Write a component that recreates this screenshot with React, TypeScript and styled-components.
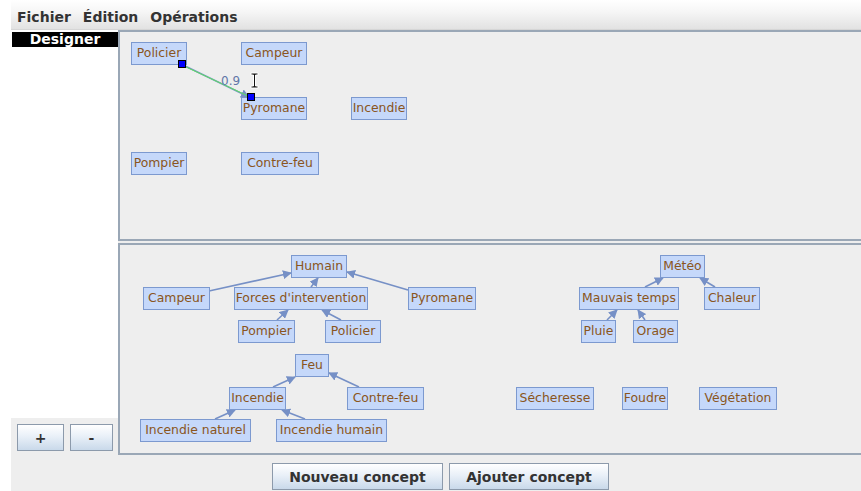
import styled, { createGlobalStyle } from 'styled-components';

const GlobalStyle = createGlobalStyle`
  html, body {
    margin: 0;
    padding: 0;
    background: #ffffff;
    overflow: hidden;
  }
  body {
    font-family: 'DejaVu Sans', 'Liberation Sans', sans-serif;
  }
`;

const Frame = styled.div`
  margin-left: 11px;
  width: 850px;
  height: 491px;
  display: flex;
  flex-direction: column;
  background: #eeeeee;
`;

const MenuBar = styled.div`
  height: 30px;
  display: flex;
  align-items: center;
  gap: 12px;
  padding: 5px 0 0 6px;
  box-sizing: border-box;
  background: linear-gradient(#ffffff 0%, #f6f6f6 40%, #e2e2e2 100%);
  border-bottom: 1px solid #d6d6d6;
`;

const MenuItem = styled.span`
  font-size: 14px;
  font-weight: bold;
  color: #333333;
`;

const Body = styled.div`
  height: 425px;
  display: flex;
`;

const SideColumn = styled.div`
  width: 107px;
  display: flex;
  flex-direction: column;
`;

const List = styled.div`
  flex: 1;
  background: #ffffff;
  padding: 2px 0 0 1px;
`;

const ListRow = styled.div<{ $selected?: boolean }>`
  height: 15px;
  line-height: 15px;
  text-align: center;
  font-size: 14px;
  font-weight: bold;
  color: ${(p) => (p.$selected ? '#ffffff' : '#333333')};
  background: ${(p) => (p.$selected ? '#000000' : 'transparent')};
`;

const SideButtons = styled.div`
  height: 37px;
  display: flex;
  gap: 6px;
  padding: 6px 0 0 6px;
  box-sizing: border-box;
`;

const Button = styled.button<{ $w: number }>`
  width: ${(p) => p.$w}px;
  height: 27px;
  padding: 0;
  border: 1px solid #8c9aab;
  background: linear-gradient(#ffffff 0%, #e9f0f8 45%, #c9d9ea 100%);
  font-family: 'DejaVu Sans', 'Liberation Sans', sans-serif;
  font-size: 14px;
  font-weight: bold;
  color: #333333;
`;

const SplitPane = styled.div`
  flex: 1;
  display: flex;
  flex-direction: column;
  gap: 2px;
`;

const Panel = styled.div<{ $h: number }>`
  position: relative;
  height: ${(p) => p.$h}px;
  box-sizing: border-box;
  background: #eeeeee;
  border: 2px solid #9aa7b6;
  border-right: none;
  overflow: hidden;
`;

const Canvas = styled.svg`
  position: absolute;
  left: 0;
  top: 0;
  width: 100%;
  height: 100%;
  overflow: visible;
`;

const Node = styled.div<{ $x: number; $y: number; $w: number }>`
  position: absolute;
  left: ${(p) => p.$x}px;
  top: ${(p) => p.$y}px;
  width: ${(p) => p.$w}px;
  height: 23px;
  box-sizing: border-box;
  background: #c5d8fa;
  border: 1px solid #7c99cf;
  font-size: 12.4px;
  line-height: 20px;
  text-align: center;
  white-space: nowrap;
  color: #8a5520;
`;

const Handle = styled.div<{ $x: number; $y: number }>`
  position: absolute;
  left: ${(p) => p.$x}px;
  top: ${(p) => p.$y}px;
  width: 8px;
  height: 8px;
  box-sizing: border-box;
  background: #0000ff;
  border: 1px solid #000000;
`;

const EdgeLabel = styled.span<{ $x: number; $y: number }>`
  position: absolute;
  left: ${(p) => p.$x}px;
  top: ${(p) => p.$y}px;
  font-size: 12px;
  color: #6176a8;
`;

const Cursor = styled.svg<{ $x: number; $y: number }>`
  position: absolute;
  left: ${(p) => p.$x}px;
  top: ${(p) => p.$y}px;
`;

const Footer = styled.div`
  flex: 1;
  display: flex;
  justify-content: center;
  gap: 6px;
  padding: 8px 0 0 9px;
  box-sizing: border-box;
`;

type N = { label: string; x: number; y: number; w: number };
type E = [number, number, number, number];

// page coordinates; origin of each panel's inner box is subtracted below
const TOP_ORIGIN = { x: 120, y: 32 };
const BOTTOM_ORIGIN = { x: 120, y: 245 };

const topNodes: N[] = [
  { label: 'Policier', x: 131, y: 42, w: 56 },
  { label: 'Campeur', x: 241, y: 42, w: 66 },
  { label: 'Pyromane', x: 241, y: 97, w: 66 },
  { label: 'Incendie', x: 351, y: 97, w: 56 },
  { label: 'Pompier', x: 131, y: 152, w: 56 },
  { label: 'Contre-feu', x: 241, y: 152, w: 78 },
];

const bottomNodes: N[] = [
  { label: 'Humain', x: 291, y: 255, w: 56 },
  { label: 'Campeur', x: 143, y: 287, w: 67 },
  { label: "Forces d'intervention", x: 234, y: 287, w: 134 },
  { label: 'Pyromane', x: 408, y: 287, w: 68 },
  { label: 'Pompier', x: 238, y: 320, w: 57 },
  { label: 'Policier', x: 325, y: 320, w: 56 },
  { label: 'Feu', x: 295, y: 354, w: 34 },
  { label: 'Incendie', x: 229, y: 387, w: 57 },
  { label: 'Contre-feu', x: 347, y: 387, w: 77 },
  { label: 'Incendie naturel', x: 140, y: 419, w: 111 },
  { label: 'Incendie humain', x: 276, y: 419, w: 111 },
  { label: 'Météo', x: 660, y: 255, w: 45 },
  { label: 'Mauvais temps', x: 579, y: 287, w: 100 },
  { label: 'Chaleur', x: 704, y: 287, w: 56 },
  { label: 'Pluie', x: 581, y: 320, w: 35 },
  { label: 'Orage', x: 633, y: 320, w: 45 },
  { label: 'Sécheresse', x: 516, y: 387, w: 78 },
  { label: 'Foudre', x: 622, y: 387, w: 46 },
  { label: 'Végétation', x: 699, y: 387, w: 78 },
];

const bottomEdges: E[] = [
  [209, 291, 291, 273],
  [311, 287, 318, 278],
  [408, 290, 347, 272],
  [277, 320, 288, 310],
  [341, 320, 322, 310],
  [273, 387, 295, 377],
  [359, 387, 329, 373],
  [215, 419, 235, 410],
  [305, 419, 282, 410],
  [645, 287, 663, 278],
  [715, 287, 700, 278],
  [607, 320, 617, 310],
  [645, 320, 638, 310],
];

function Nodes({ nodes, origin }: { nodes: N[]; origin: { x: number; y: number } }) {
  return (
    <>
      {nodes.map((n) => (
        <Node key={n.label + n.x} $x={n.x - origin.x} $y={n.y - origin.y} $w={n.w}>
          {n.label}
        </Node>
      ))}
    </>
  );
}

function ArrowDefs({ id }: { id: string }) {
  return (
    <defs>
      <marker id={id} viewBox="0 0 10 10" refX="9" refY="5" markerWidth="9" markerHeight="9" markerUnits="userSpaceOnUse" orient="auto">
        <path d="M0 0 L10 5 L0 10 z" fill="#7690c6" />
      </marker>
    </defs>
  );
}

export default function App() {
  const o = TOP_ORIGIN;
  const b = BOTTOM_ORIGIN;
  return (
    <>
      <GlobalStyle />
      <Frame>
        <MenuBar>
          <MenuItem>Fichier</MenuItem>
          <MenuItem>Édition</MenuItem>
          <MenuItem>Opérations</MenuItem>
        </MenuBar>
        <Body>
          <SideColumn>
            <List>
              <ListRow $selected>Designer</ListRow>
            </List>
            <SideButtons>
              <Button $w={47}>+</Button>
              <Button $w={43}>-</Button>
            </SideButtons>
          </SideColumn>
          <SplitPane>
            <Panel $h={211}>
              <Nodes nodes={topNodes} origin={o} />
              <Canvas>
                <ArrowDefs id="arrowTop" />
                <line x1={183 - o.x} y1={65 - o.y} x2={249 - o.x} y2={97 - o.y} stroke="#7690c6" strokeWidth="1.5" markerEnd="url(#arrowTop)" />
                <line x1={184 - o.x} y1={66 - o.y} x2={248 - o.x} y2={96 - o.y} stroke="#5fe05f" strokeWidth="1" />
              </Canvas>
              <EdgeLabel $x={221 - o.x} $y={74 - o.y}>0.9</EdgeLabel>
              <Handle $x={178 - o.x} $y={60 - o.y} />
              <Handle $x={247 - o.x} $y={93 - o.y} />
              <Cursor $x={250 - o.x} $y={72 - o.y} width="9" height="17" viewBox="0 0 9 17">
                <path d="M1 1 H8 V3 H5.5 V14 H8 V16 H1 V14 H3.5 V3 H1 Z" fill="#111" stroke="#fff" strokeWidth="1" />
              </Cursor>
            </Panel>
            <Panel $h={212}>
              <Canvas>
                <ArrowDefs id="arrowBottom" />
                {bottomEdges.map(([x1, y1, x2, y2], i) => (
                  <line key={i} x1={x1 - b.x} y1={y1 - b.y} x2={x2 - b.x} y2={y2 - b.y} stroke="#7690c6" strokeWidth="1.6" markerEnd="url(#arrowBottom)" />
                ))}
              </Canvas>
              <Nodes nodes={bottomNodes} origin={b} />
            </Panel>
          </SplitPane>
        </Body>
        <Footer>
          <Button $w={171}>Nouveau concept</Button>
          <Button $w={160}>Ajouter concept</Button>
        </Footer>
      </Frame>
    </>
  );
}
